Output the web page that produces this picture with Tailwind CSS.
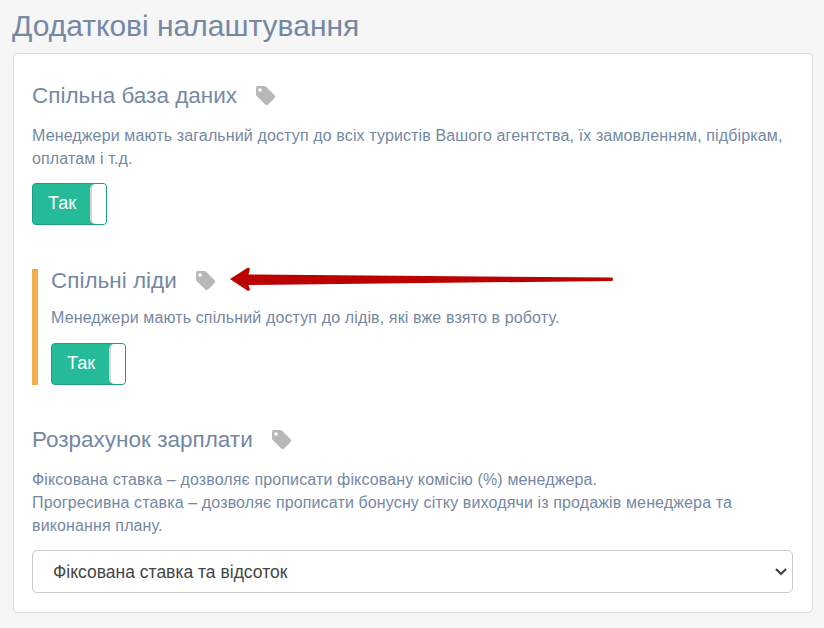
<!DOCTYPE html>
<html lang="uk">
<head>
    <meta charset="UTF-8">
    <title>Додаткові налаштування</title>
    <script src="https://cdn.jsdelivr.net/npm/@tailwindcss/browser@4"></script>
</head>
<body class="bg-[#f6f6f6] h-[628px] overflow-hidden font-['Liberation_Sans',Arial,sans-serif] text-[#7588a3]">
    <div class="relative pl-[13px] w-[813px]">
        <h1 class="text-[30px] leading-[32px] pt-[10px] -ml-[1px] mb-[11px]">Додаткові налаштування</h1>

        <div class="bg-white border border-[#dedede] rounded-[5px] pl-[18px] pr-[19px] pt-[27px] h-[560px]">
            <!-- Спільна база даних -->
            <div class="flex items-center h-[30px] text-[22.5px]">
                <h2>Спільна база даних</h2>
                <svg class="ml-[18px] -mt-[1px] w-[21px] h-[21px] fill-[#b8b8b8]" viewBox="0 0 21 21"><path d="M1 2.500a1.500 1.500 0 0 1 1.500-1.500h7a2 2 0 0 1 1.400.6l8.700 8.700a2 2 0 0 1 0 2.800l-6.500 6.500a2 2 0 0 1-2.800 0L1.600 10.900A2 2 0 0 1 1 9.500zM5 3.200a1.800 1.800 0 1 0 0 3.600 1.800 1.800 0 0 0 0-3.600z" fill-rule="evenodd"/></svg>
            </div>
            <p class="text-[16px] tracking-[0.13px] leading-[23px] mt-[13px]">Менеджери мають загальний доступ до всіх туристів Вашого агентства, їх замовленням, підбіркам, оплатам і т.д.</p>
            <div class="flex w-[75px] h-[42px] mt-[13px] border border-[#1a9d80] rounded-[4px] overflow-hidden bg-[#26bb98]">
                <div class="w-[57px] pl-[1px] pb-[2px] text-white text-[18px] flex items-center justify-center">Так</div>
                <div class="flex-1 bg-white border-l-2 border-[#d5d5d5] rounded-l-[5px]"></div>
            </div>

            <!-- Спільні ліди -->
            <div class="border-l-[6px] border-[#f0ad4e] pl-[13px] mt-[44px] h-[116px]">
                <div class="flex items-center h-[24px] text-[22.5px]">
                    <h2>Спільні ліди</h2>
                    <svg class="ml-[18px] -mt-[2px] w-[21px] h-[21px] fill-[#b8b8b8]" viewBox="0 0 21 21"><path d="M1 2.500a1.500 1.500 0 0 1 1.500-1.500h7a2 2 0 0 1 1.400.6l8.700 8.700a2 2 0 0 1 0 2.800l-6.500 6.500a2 2 0 0 1-2.800 0L1.600 10.900A2 2 0 0 1 1 9.500zM5 3.200a1.800 1.800 0 1 0 0 3.600 1.800 1.800 0 0 0 0-3.600z" fill-rule="evenodd"/></svg>
                </div>
                <p class="text-[16px] tracking-[0.13px] leading-[23px] mt-[13px]">Менеджери мають спільний доступ до лідів, які вже взято в роботу.</p>
                <div class="flex w-[75px] h-[42px] mt-[14px] border border-[#1a9d80] rounded-[4px] overflow-hidden bg-[#26bb98]">
                    <div class="w-[57px] pl-[1px] pb-[2px] text-white text-[18px] flex items-center justify-center">Так</div>
                    <div class="flex-1 bg-white border-l-2 border-[#d5d5d5] rounded-l-[5px]"></div>
                </div>
            </div>

            <!-- Розрахунок зарплати -->
            <div class="flex items-center h-[30px] text-[22.5px] mt-[40px]">
                <h2>Розрахунок зарплати</h2>
                <svg class="ml-[18px] -mt-[1px] w-[21px] h-[21px] fill-[#b8b8b8]" viewBox="0 0 21 21"><path d="M1 2.500a1.500 1.500 0 0 1 1.500-1.500h7a2 2 0 0 1 1.400.6l8.700 8.700a2 2 0 0 1 0 2.800l-6.500 6.500a2 2 0 0 1-2.800 0L1.600 10.900A2 2 0 0 1 1 9.500zM5 3.200a1.800 1.800 0 1 0 0 3.600 1.800 1.800 0 0 0 0-3.600z" fill-rule="evenodd"/></svg>
            </div>
            <p class="text-[16px] tracking-[0.13px] leading-[23px] mt-[13px]">Фіксована ставка – дозволяє прописати фіксовану комісію (%) менеджера.<br>Прогресивна ставка – дозволяє прописати бонусну сітку виходячи із продажів менеджера та виконання плану.</p>
            <div class="relative flex items-center h-[43px] mt-[13px] border border-[#cccccc] rounded-[5px] bg-white pl-[20px] pt-[1px] text-[17.5px] text-[#444444]">
                Фіксована ставка та відсоток
                <svg class="absolute right-[5px] top-[16px] w-[12px] h-[9px]" viewBox="0 0 12 9" fill="none" stroke="#444444" stroke-width="2.2"><path d="M1 2l5 5 5-5"/></svg>
            </div>
        </div>

        <!-- стрілка поверх картки -->
        <svg class="absolute left-[228px] top-[265px] w-[388px] h-[28px]" viewBox="0 0 388 28">
            <path d="M2 14L20 2.500L22 3.500L20.500 9.500L384 12.500Q386 14 384 16L20.500 20L22 25L20 26Z" fill="#bb0200"/>
        </svg>
    </div>
</body>
</html>
